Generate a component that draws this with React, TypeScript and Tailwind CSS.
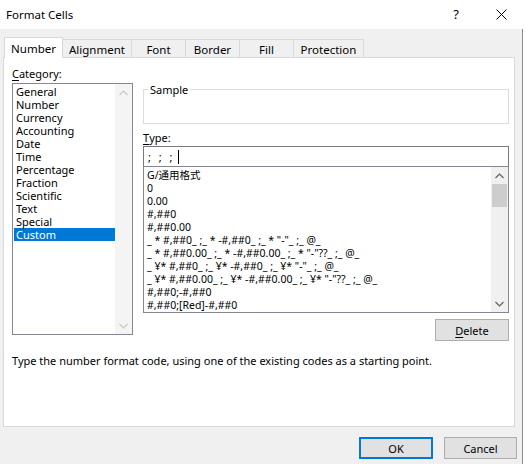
import React from 'react';

const categories = [
  'General',
  'Number',
  'Currency',
  'Accounting',
  'Date',
  'Time',
  'Percentage',
  'Fraction',
  'Scientific',
  'Text',
  'Special',
  'Custom',
];

const formats = [
  'G/通用格式',
  '0',
  '0.00',
  '#,##0',
  '#,##0.00',
  '_ * #,##0_ ;_ * -#,##0_ ;_ * "-"_ ;_ @_',
  '_ * #,##0.00_ ;_ * -#,##0.00_ ;_ * "-"??_ ;_ @_',
  '_ ¥* #,##0_ ;_ ¥* -#,##0_ ;_ ¥* "-"_ ;_ @_',
  '_ ¥* #,##0.00_ ;_ ¥* -#,##0.00_ ;_ ¥* "-"??_ ;_ @_',
  '#,##0;-#,##0',
  '#,##0;[Red]-#,##0',
];

const tabs = [
  { label: 'Number', w: 'w-[59px]' },
  { label: 'Alignment', w: 'w-[69px]' },
  { label: 'Font', w: 'w-[54px]' },
  { label: 'Border', w: 'w-[54px]' },
  { label: 'Fill', w: 'w-[54px]' },
  { label: 'Protection', w: 'w-[70px]' },
];

function Chevron({ up, color }: { up?: boolean; color: string }) {
  return (
    <svg width="9" height="6" viewBox="0 0 9 6">
      <polyline
        points={up ? '0.5,5 4.5,1 8.5,5' : '0.5,1 4.5,5 8.5,1'}
        fill="none"
        stroke={color}
        strokeWidth="1.2"
      />
    </svg>
  );
}

export default function App() {
  return (
    <div className="w-[526px] h-[464px] bg-white font-['Noto_Sans','Noto_Sans_CJK_JP',sans-serif] text-[11px] text-black leading-[13px] overflow-hidden">
      {/* title bar */}
      <div className="h-[29px] w-[523px] flex items-center bg-white">
        <span className="pl-[6px] text-[11.5px]">Format Cells</span>
        <div className="ml-auto flex items-center">
          <span className="w-[20px] text-center text-[13px] mr-[30px]">?</span>
          <svg width="11" height="11" viewBox="0 0 11 11" className="mr-[16px]">
            <path d="M0.5 0.5 L10.5 10.5 M10.5 0.5 L0.5 10.5" stroke="#000" strokeWidth="1" />
          </svg>
        </div>
      </div>

      {/* body */}
      <div className="w-[523px] h-[435px] bg-[#f0f0f0] border-r border-[#8c8c8c]">
        {/* tabs */}
        <div className="pt-[8px] pl-[4px] flex items-end h-[28px] text-[11.5px]">
          {tabs.map((t, i) =>
            i === 0 ? (
              <div
                key={t.label}
                className={`${t.w} h-[21px] -mb-px relative z-10 bg-white border-t border-l border-r border-[#d9d9d9] flex items-center justify-center`}
              >
                {t.label}
              </div>
            ) : (
              <div
                key={t.label}
                className={`${t.w} h-[18px] bg-[#f0f0f0] border-t border-r border-[#d9d9d9] flex items-center justify-center pt-[1px]`}
              >
                {t.label}
              </div>
            )
          )}
        </div>

        {/* panel */}
        <div className="ml-[3px] w-[512px] h-[370px] bg-white border border-[#d9d9d9] pl-[8px]">
          <div className="flex gap-[10px]">
            {/* category column */}
            <div className="w-[121px] pt-[8px]">
              <div className="h-[15px] flex items-center">
                <span className="underline underline-offset-2">C</span>ategory:
              </div>
              <div className="mt-[2px] h-[252px] border border-[#828790] flex">
                <div className="flex-1 pl-[1px] pt-[1px]">
                  {categories.map((c) => (
                    <div
                      key={c}
                      className={
                        c === 'Custom'
                          ? 'h-[13px] pl-[2px] flex items-center bg-[#0078d7] text-white'
                          : 'h-[13px] pl-[2px] flex items-center'
                      }
                    >
                      {c}
                    </div>
                  ))}
                </div>
                <div className="w-[17px] bg-[#f4f4f4] flex flex-col justify-between">
                  <div className="h-[17px] flex items-center justify-center">
                    <Chevron up color="#c8c8c8" />
                  </div>
                  <div className="h-[17px] flex items-center justify-center">
                    <Chevron color="#c8c8c8" />
                  </div>
                </div>
              </div>
            </div>

            {/* right column */}
            <div className="w-[366px]">
              <div className="mt-[31px] h-[35px] border border-[#dcdcdc] relative">
                <span className="absolute -top-[7px] left-[4px] bg-white px-[2px]">Sample</span>
              </div>
              <div className="mt-[6px] h-[14px] flex items-center">
                <span className="underline underline-offset-2">T</span>ype:
              </div>
              <div className="mt-[2px] h-[21px] border border-[#7a7a7a] flex items-center pl-[4px] tracking-[2.5px]">
                <span>; ; ;</span>
                <span className="ml-[3px] w-px h-[14px] bg-black" />
              </div>
              <div className="-mt-px h-[147px] border border-[#828790] flex">
                <div className="flex-1 pt-[2px] pl-[3px] text-[10.5px]">
                  {formats.map((f) => (
                    <div key={f} className="h-[13px] flex items-center whitespace-pre">
                      {f}
                    </div>
                  ))}
                </div>
                <div className="w-[17px] bg-[#f0f0f0] flex flex-col">
                  <div className="h-[17px] flex items-center justify-center">
                    <Chevron up color="#606060" />
                  </div>
                  <div className="mx-[1px] h-[23px] bg-[#cdcdcd]" />
                  <div className="mt-auto h-[17px] flex items-center justify-center">
                    <Chevron color="#606060" />
                  </div>
                </div>
              </div>
              <div className="mt-[6px] flex justify-end">
                <div className="w-[74px] h-[22px] bg-[#e1e1e1] border border-[#adadad] flex items-center justify-center">
                  <span className="underline underline-offset-2">D</span>elete
                </div>
              </div>
            </div>
          </div>

          <div className="mt-[12px] h-[14px] flex items-center">
            Type the number format code, using one of the existing codes as a starting point.
          </div>
        </div>

        {/* buttons */}
        <div className="mt-[10px] flex justify-end gap-[11px] pr-[5px]">
          <div className="w-[74px] h-[22px] bg-[#e1e1e1] border-2 border-[#0078d7] flex items-center justify-center">
            OK
          </div>
          <div className="w-[73px] h-[22px] bg-[#e1e1e1] border border-[#adadad] flex items-center justify-center">
            Cancel
          </div>
        </div>
      </div>
    </div>
  );
}
